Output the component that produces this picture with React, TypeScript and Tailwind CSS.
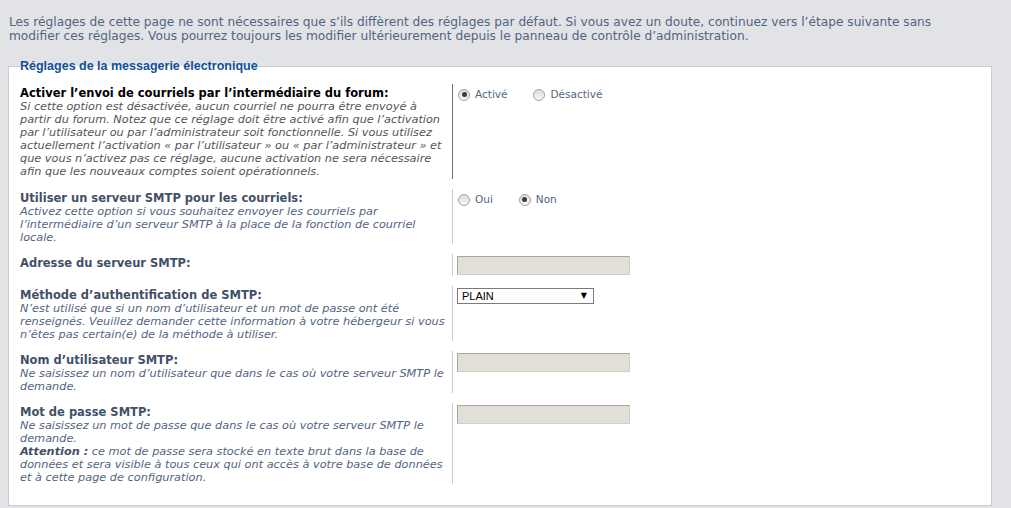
import React from "react";

const Radio = ({ checked }: { checked?: boolean }) => (
  <span className="inline-flex items-center justify-center w-[12px] h-[12px] rounded-full border border-[#a3a3a3] bg-[linear-gradient(180deg,#dcdcdc,#f7f7f7)] shrink-0">
    {checked && <span className="w-[5px] h-[5px] rounded-full bg-[#3c3c3c]" />}
  </span>
);

const RadioItem = ({ label, checked, last }: { label: string; checked?: boolean; last?: boolean }) => (
  <span className={`inline-flex items-center ${last ? "" : "mr-[26px]"}`}>
    <Radio checked={checked} />
    <span className="ml-[5px] text-[#536482] text-[10.5px] leading-[13px]">{label}</span>
  </span>
);

const TextBox = () => (
  <div className="mt-[2px] mb-[1px] ml-[-1px] w-[173px] h-[19px] bg-[#e2dfd8] border border-t-[#a9a69f] border-l-[#a9a69f] border-r-[#d2cfc7] border-b-[#d2cfc7]" />
);

type RowProps = {
  label: string;
  lines?: React.ReactNode[];
  hover?: boolean;
  children: React.ReactNode;
  last?: boolean;
};

const Row = ({ label, lines = [], hover, children, last }: RowProps) => (
  <div className={`flex ${last ? "" : "mb-[10px]"}`}>
    <div className={`w-[432px] shrink-0 pt-[3px] ${hover ? "pb-[1px]" : ""}`}>
      <div className={`font-bold text-[11.5px] leading-[13px] whitespace-nowrap ${hover ? "text-black" : "text-[#425067]"}`}>{label}</div>
      {lines.map((l, i) => (
        <div key={i} className={`italic text-[11.3px] leading-[13px] whitespace-nowrap ${hover ? "text-[#555]" : "text-[#536482]"}`}>
          {l}
        </div>
      ))}
    </div>
    <div className={`flex-1 border-l ${hover ? "border-[#707070]" : "border-[#cccccc]"} pl-[5px]`}>{children}</div>
  </div>
);

export default function App() {
  return (
    <div className="min-h-screen bg-[#e1e3e7] font-['DejaVu_Sans',Verdana,sans-serif] pt-[16px] pb-[2px]">
      <div className="px-[9px] text-[12.2px] leading-[13.5px] text-[#536482]">
        <div className="whitespace-nowrap">
          Les réglages de cette page ne sont nécessaires que s’ils diffèrent des réglages par défaut. Si vous avez un doute, continuez vers l’étape suivante sans
        </div>
        <div className="whitespace-nowrap">
          modifier ces réglages. Vous pourrez toujours les modifier ultérieurement depuis le panneau de contrôle d’administration.
        </div>
      </div>
      <fieldset className="ml-[8px] mr-[19px] mt-[16px] border border-[#cccccc] bg-white pl-[11px] pr-[11px] pt-[11px] pb-[21px]">
        <legend className="font-['Liberation_Sans',Arial,sans-serif] font-bold text-[12.5px] leading-[14px] text-[#115098]">Réglages de la messagerie électronique</legend>

        <Row
          hover
          label="Activer l’envoi de courriels par l’intermédiaire du forum:"
          lines={[
            "Si cette option est désactivée, aucun courriel ne pourra être envoyé à",
            "partir du forum. Notez que ce réglage doit être activé afin que l’activation",
            "par l’utilisateur ou par l’administrateur soit fonctionnelle. Si vous utilisez",
            "actuellement l’activation « par l’utilisateur » ou « par l’administrateur » et",
            "que vous n’activez pas ce réglage, aucune activation ne sera nécessaire",
            "afin que les nouveaux comptes soient opérationnels.",
          ]}
        >
          <div className="pt-[4px] flex">
            <RadioItem label="Activé" checked />
            <RadioItem label="Désactivé" last />
          </div>
        </Row>

        <Row
          label="Utiliser un serveur SMTP pour les courriels:"
          lines={[
            "Activez cette option si vous souhaitez envoyer les courriels par",
            "l’intermédiaire d’un serveur SMTP à la place de la fonction de courriel",
            "locale.",
          ]}
        >
          <div className="pt-[4px] flex">
            <RadioItem label="Oui" />
            <RadioItem label="Non" checked last />
          </div>
        </Row>

        <Row label="Adresse du serveur SMTP:">
          <TextBox />
        </Row>

        <Row
          label="Méthode d’authentification de SMTP:"
          lines={[
            "N’est utilisé que si un nom d’utilisateur et un mot de passe ont été",
            "renseignés. Veuillez demander cette information à votre hébergeur si vous",
            "n’êtes pas certain(e) de la méthode à utiliser.",
          ]}
        >
          <div className="mt-[2px] ml-[-1px] w-[137px] h-[16px] bg-white border border-[#7a7a7a] flex items-center justify-between pl-[4px] pr-[6px]">
            <span className="font-['Liberation_Sans',Arial,sans-serif] text-[11px] leading-[12px] text-black">PLAIN</span>
            <span className="text-[8px] leading-[8px] text-black">▼</span>
          </div>
        </Row>

        <Row
          label="Nom d’utilisateur SMTP:"
          lines={["Ne saisissez un nom d’utilisateur que dans le cas où votre serveur SMTP le", "demande."]}
        >
          <TextBox />
        </Row>

        <Row
          last
          label="Mot de passe SMTP:"
          lines={[
            "Ne saisissez un mot de passe que dans le cas où votre serveur SMTP le",
            "demande.",
            <>
              <span className="font-bold text-[#425067]">Attention :</span> ce mot de passe sera stocké en texte brut dans la base de
            </>,
            "données et sera visible à tous ceux qui ont accès à votre base de données",
            "et à cette page de configuration.",
          ]}
        >
          <TextBox />
        </Row>
      </fieldset>
    </div>
  );
}
